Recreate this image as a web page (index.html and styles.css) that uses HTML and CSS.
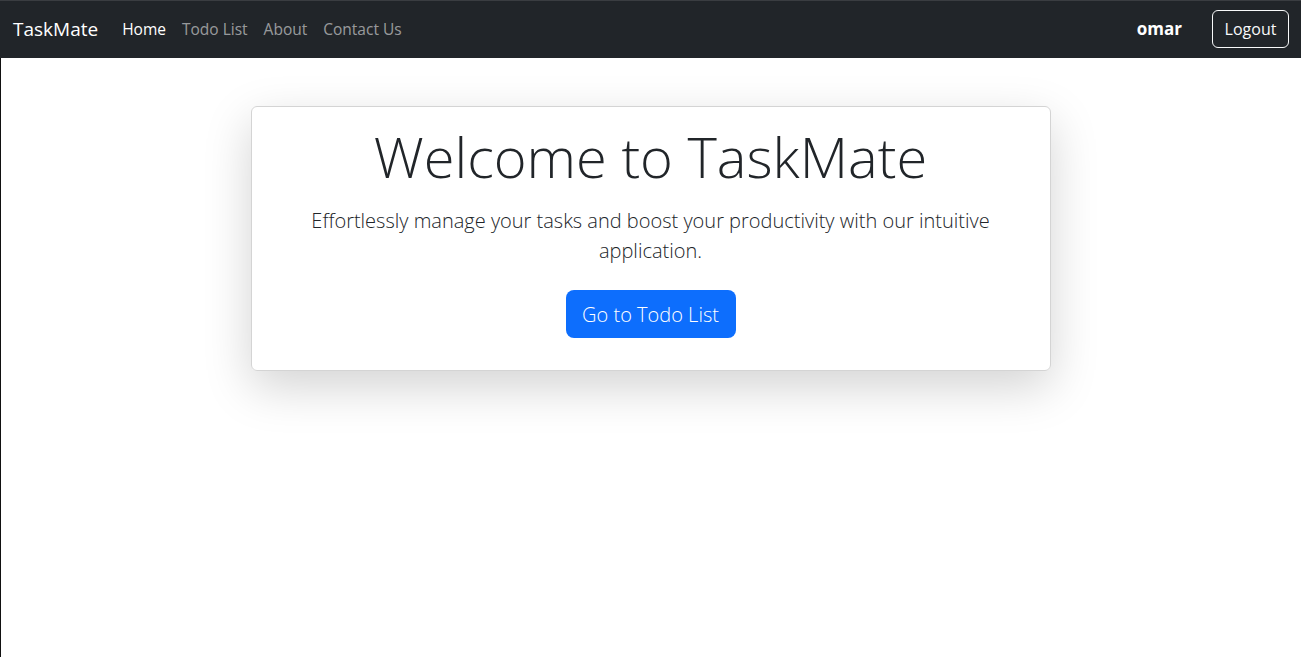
FILE: index.html
```html
<!DOCTYPE html>
<html lang="en">
<head>
<meta charset="utf-8">
<title>TaskMate</title>
<link rel="stylesheet" href="styles.css">
</head>
<body>
<nav class="navbar">
  <div class="nav-left">
    <a class="brand" href="#">TaskMate</a>
    <ul class="nav-links">
      <li><a class="nav-link active" href="#">Home</a></li>
      <li><a class="nav-link" href="#">Todo List</a></li>
      <li><a class="nav-link" href="#">About</a></li>
      <li><a class="nav-link" href="#">Contact Us</a></li>
    </ul>
  </div>
  <div class="nav-right">
    <span class="user">omar</span>
    <button class="btn-logout">Logout</button>
  </div>
</nav>
<main class="page">
  <section class="card">
    <h1 class="title">Welcome to TaskMate</h1>
    <p class="lead">Effortlessly manage your tasks and boost your productivity with our intuitive application.</p>
    <a class="btn-primary" href="#">Go to Todo List</a>
  </section>
</main>
</body>
</html>
```
FILE: styles.css
```css
* { box-sizing: border-box; }
html, body { margin: 0; padding: 0; height: 100%; }
body {
  font-family: "Open Sans", "Noto Sans", sans-serif;
  color: #212529;
  background: #fff;
  display: flex;
  flex-direction: column;
}
a { text-decoration: none; }

.navbar {
  height: 58px;
  background: #212529;
  border-top: 1px solid #3a3d41;
  display: flex;
  align-items: center;
  justify-content: space-between;
  padding: 0 12px 2px 13px;
  flex-shrink: 0;
}
.nav-left { display: flex; align-items: center; }
.brand {
  color: #fff;
  font-size: 19px;
  margin-right: 16px;
}
.nav-links { list-style: none; margin: 0; padding: 0; display: flex; }
.nav-link {
  display: block;
  padding: 8px 8px;
  font-size: 15.5px;
  color: rgba(255,255,255,.55);
}
.nav-link.active { color: #fff; }
.nav-right { display: flex; align-items: center; gap: 30px; }
.user { color: #fff; font-weight: 700; font-size: 17px; }
.btn-logout {
  font-family: inherit;
  font-size: 16px;
  color: #f8f9fa;
  background: transparent;
  border: 1px solid #f8f9fa;
  border-radius: 6px;
  height: 38px;
  width: 77px;
  padding: 0;
}

.page {
  flex: 1;
  border-left: 1px solid #111;
  display: flex;
  flex-direction: column;
  align-items: center;
  padding-top: 48px;
}
.card {
  width: 800px;
  margin-left: -1px;
  border: 1px solid #d4d4d4;
  border-radius: 6px;
  box-shadow: 0 16px 48px rgba(0,0,0,.175);
  padding: 16px 16px 32px;
  display: flex;
  flex-direction: column;
  align-items: center;
  text-align: center;
}
.title {
  font-size: 56px;
  font-weight: 300;
  line-height: 66px;
  margin: 0 0 8px;
}
.lead {
  font-size: 20px;
  font-weight: 300;
  line-height: 30px;
  margin: 9px 0 24px;
  padding: 0 30px;
}
.btn-primary {
  background: #0d6efd;
  color: #fff;
  font-size: 20px;
  font-weight: 300;
  border-radius: 8px;
  width: 170px;
  height: 48px;
  display: flex;
  align-items: center;
  justify-content: center;
}
```
